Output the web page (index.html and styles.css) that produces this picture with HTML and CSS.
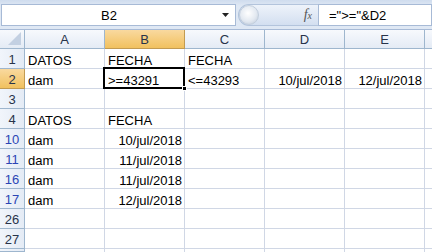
FILE: index.html
```html
<!DOCTYPE html>
<html lang="es">

<head>
    <meta charset="utf-8">
    <title>Hoja1</title>
    <link rel="stylesheet" href="styles.css">
</head>

<body>

<!-- barra de fórmulas -->
<div class="formula-bar">
    <div class="name-box">B2</div>
    <div class="name-arrow">
        <svg width="7" height="4" viewBox="0 0 7 4"><path d="M0 0h7L3.5 4z" fill="#222"/></svg>
    </div>
    <div class="fx-pill">
        <span class="knob"></span>
        <span class="fx">f<small>x</small></span>
    </div>
    <div class="formula">="&gt;="&amp;D2</div>
</div>

<!-- hoja -->
<div class="sheet">
    <div class="corner"><span class="tri"></span></div>
    <div class="col-head">A</div>
    <div class="col-head sel">B</div>
    <div class="col-head">C</div>
    <div class="col-head">D</div>
    <div class="col-head">E</div>
    <div class="col-head"></div>

    <div class="row-head">1</div>
    <div class="cell">DATOS</div>
    <div class="cell">FECHA</div>
    <div class="cell">FECHA</div>
    <div class="cell"></div>
    <div class="cell"></div>
    <div class="cell"></div>

    <div class="row-head sel">2</div>
    <div class="cell">dam</div>
    <div class="cell active">&gt;=43291<span class="handle"></span></div>
    <div class="cell">&lt;=43293</div>
    <div class="cell num">10/jul/2018</div>
    <div class="cell num">12/jul/2018</div>
    <div class="cell"></div>

    <div class="row-head">3</div>
    <div class="cell"></div>
    <div class="cell"></div>
    <div class="cell"></div>
    <div class="cell"></div>
    <div class="cell"></div>
    <div class="cell"></div>

    <div class="row-head">4</div>
    <div class="cell">DATOS</div>
    <div class="cell">FECHA</div>
    <div class="cell"></div>
    <div class="cell"></div>
    <div class="cell"></div>
    <div class="cell"></div>

    <div class="row-head filt">10</div>
    <div class="cell">dam</div>
    <div class="cell num">10/jul/2018</div>
    <div class="cell"></div>
    <div class="cell"></div>
    <div class="cell"></div>
    <div class="cell"></div>

    <div class="row-head filt">11</div>
    <div class="cell">dam</div>
    <div class="cell num">11/jul/2018</div>
    <div class="cell"></div>
    <div class="cell"></div>
    <div class="cell"></div>
    <div class="cell"></div>

    <div class="row-head filt">16</div>
    <div class="cell">dam</div>
    <div class="cell num">11/jul/2018</div>
    <div class="cell"></div>
    <div class="cell"></div>
    <div class="cell"></div>
    <div class="cell"></div>

    <div class="row-head filt">17</div>
    <div class="cell">dam</div>
    <div class="cell num">12/jul/2018</div>
    <div class="cell"></div>
    <div class="cell"></div>
    <div class="cell"></div>
    <div class="cell"></div>

    <div class="row-head">26</div>
    <div class="cell"></div>
    <div class="cell"></div>
    <div class="cell"></div>
    <div class="cell"></div>
    <div class="cell"></div>
    <div class="cell"></div>

    <div class="row-head">27</div>
    <div class="cell"></div>
    <div class="cell"></div>
    <div class="cell"></div>
    <div class="cell"></div>
    <div class="cell"></div>
    <div class="cell"></div>

    <div class="row-head last"></div>
    <div class="cell"></div>
    <div class="cell"></div>
    <div class="cell"></div>
    <div class="cell"></div>
    <div class="cell"></div>
    <div class="cell"></div>
</div>

</body>

</html>
```

FILE: styles.css
```css
/* general */
*
{
    margin: 0;
    padding: 0;
    box-sizing: border-box;
}

body
{
    width: 432px;
    height: 252px;
    overflow: hidden;
    background: #fff;
    font-family: "Liberation Sans", Arial, sans-serif;
    font-size: 13px;
    color: #000;
}

/* barra de fórmulas */
.formula-bar
{
    display: flex;
    align-items: center;
    height: 30px;
    padding: 3px 0 3px 1px;
    background: linear-gradient(#cfdcee, #dfe8f4 20%, #dfe8f4);
    border-bottom: 1px solid #a7bad6;
}

.name-box
{
    width: 215px;
    height: 22px;
    line-height: 21px;
    text-align: center;
    background: #fff;
    border: 1px solid #a7bad6;
    border-right: none;
    font-size: 13px;
}

.name-arrow
{
    display: flex;
    align-items: center;
    justify-content: center;
    width: 20px;
    height: 22px;
    background: #fff;
    border: 1px solid #a7bad6;
    border-left: none;
}

.fx-pill
{
    display: flex;
    align-items: center;
    justify-content: space-between;
    width: 80px;
    height: 22px;
    margin-left: 2px;
    padding-right: 6px;
    border-radius: 11px 0 0 11px;
    background: linear-gradient(#eef3fa, #d3dff0);
    border: 1px solid #b3c4dc;
    border-right: none;
}

.knob
{
    width: 20px;
    height: 20px;
    border-radius: 50%;
    background: radial-gradient(circle at 45% 40%, #ffffff, #e3e9f1 55%, #b9c6d6);
    border: 1px solid #c2cedd;
}

.fx
{
    font-family: "Liberation Serif", serif;
    font-style: italic;
    font-size: 14px;
    color: #555;
}

.fx small
{
    font-size: 10px;
}

.formula
{
    flex: 1;
    height: 22px;
    line-height: 21px;
    padding-left: 10px;
    background: #fff;
    border: 1px solid #a7bad6;
    font-size: 13px;
}

/* hoja */
.sheet
{
    display: grid;
    grid-template-columns: 25px 80px 80px 80px 80px 80px 80px;
    grid-template-rows: 19px repeat(10, 20px) 3px;
}

.corner,
.col-head,
.row-head
{
    background: linear-gradient(#f7f9fd, #e4ebf5);
    border-right: 1px solid #9eb6ce;
    border-bottom: 1px solid #9eb6ce;
    color: #27334a;
    font-size: 13px;
    text-align: center;
}

.corner
{
    position: relative;
}

.tri
{
    position: absolute;
    right: 3px;
    bottom: 3px;
    width: 0;
    height: 0;
    border-left: 13px solid transparent;
    border-bottom: 13px solid #c3d0e2;
}

.col-head
{
    line-height: 19px;
}

.row-head
{
    line-height: 21px;
    background: linear-gradient(90deg, #f1f5fb, #e4ebf5);
}

.row-head.filt
{
    color: #2b45b5;
}

.sel
{
    background: linear-gradient(#f9d99f, #f1c15f);
    border-right-color: #c29b52;
    border-bottom-color: #c29b52;
}

.cell
{
    border-right: 1px solid #d0d7e5;
    border-bottom: 1px solid #d0d7e5;
    padding: 4px 3px 0 3px;
    line-height: 16px;
    white-space: nowrap;
    overflow: visible;
}

.cell.num
{
    text-align: right;
    padding-right: 2px;
}

/* celda activa */
.active
{
    position: relative;
}

.active::after
{
    content: "";
    position: absolute;
    left: -2px;
    top: -2px;
    right: -1px;
    bottom: -1px;
    border: 2px solid #000;
}

.handle
{
    position: absolute;
    right: -3px;
    bottom: -3px;
    width: 5px;
    height: 5px;
    background: #000;
    border: 1px solid #fff;
    z-index: 1;
}
```
